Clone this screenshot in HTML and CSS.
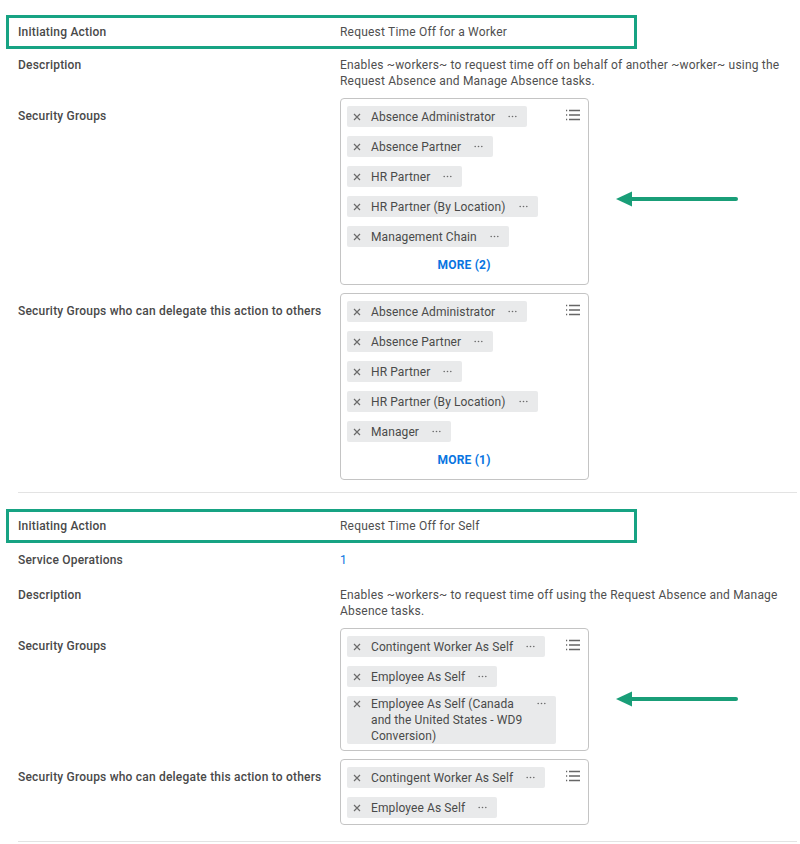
FILE: index.html
```html
<!DOCTYPE html>
<html lang="en">
<head>
    <meta charset="UTF-8">
    <meta name="viewport" content="width=device-width, initial-scale=1.0">
    <title>Business Process Policy - Initiating Actions</title>
    <link rel="stylesheet" href="styles.css">
</head>
<body>
    <main class="page">
        <!-- Request Time Off for a Worker -->
        <section class="record">
            <div class="field field-hl">
                <div class="field-label">Initiating Action</div>
                <div class="field-value">Request Time Off for a Worker</div>
            </div>
            <div class="field field-desc">
                <div class="field-label">Description</div>
                <div class="field-value">Enables ~workers~ to request time off on behalf of another ~worker~ using the Request Absence and Manage Absence tasks.</div>
            </div>
            <div class="field">
                <div class="field-label field-label-box">Security Groups</div>
                <div class="field-value field-value-row">
                    <div class="picker">
                        <div class="picker-top">
                            <ul class="chips">
                                <li class="chip"><svg class="chip-x" viewBox="0 0 8 8"><path d="M1 1L7 7M7 1L1 7"/></svg><span class="chip-text">Absence Administrator</span><svg class="chip-dots" viewBox="0 0 9 3"><circle cx="1.2" cy="1.5" r="0.8"/><circle cx="4.5" cy="1.5" r="0.8"/><circle cx="7.8" cy="1.5" r="0.8"/></svg></li>
                                <li class="chip"><svg class="chip-x" viewBox="0 0 8 8"><path d="M1 1L7 7M7 1L1 7"/></svg><span class="chip-text">Absence Partner</span><svg class="chip-dots" viewBox="0 0 9 3"><circle cx="1.2" cy="1.5" r="0.8"/><circle cx="4.5" cy="1.5" r="0.8"/><circle cx="7.8" cy="1.5" r="0.8"/></svg></li>
                                <li class="chip"><svg class="chip-x" viewBox="0 0 8 8"><path d="M1 1L7 7M7 1L1 7"/></svg><span class="chip-text">HR Partner</span><svg class="chip-dots" viewBox="0 0 9 3"><circle cx="1.2" cy="1.5" r="0.8"/><circle cx="4.5" cy="1.5" r="0.8"/><circle cx="7.8" cy="1.5" r="0.8"/></svg></li>
                                <li class="chip"><svg class="chip-x" viewBox="0 0 8 8"><path d="M1 1L7 7M7 1L1 7"/></svg><span class="chip-text">HR Partner (By Location)</span><svg class="chip-dots" viewBox="0 0 9 3"><circle cx="1.2" cy="1.5" r="0.8"/><circle cx="4.5" cy="1.5" r="0.8"/><circle cx="7.8" cy="1.5" r="0.8"/></svg></li>
                                <li class="chip"><svg class="chip-x" viewBox="0 0 8 8"><path d="M1 1L7 7M7 1L1 7"/></svg><span class="chip-text">Management Chain</span><svg class="chip-dots" viewBox="0 0 9 3"><circle cx="1.2" cy="1.5" r="0.8"/><circle cx="4.5" cy="1.5" r="0.8"/><circle cx="7.8" cy="1.5" r="0.8"/></svg></li>
                            </ul>
                            <svg class="list-icon" viewBox="0 0 16 12"><path d="M1 1.5h1.2M1 6h1.2M1 10.5h1.2M4 1.5h11M4 6h11M4 10.5h11"/></svg>
                        </div>
                        <div class="more">MORE (2)</div>
                    </div>
                    <svg class="pointer" viewBox="0 0 122 16"><path class="pointer-head" d="M0 8L16 0.5V15.5Z"/><path class="pointer-line" d="M14 8H120"/></svg>
                </div>
            </div>
            <div class="field">
                <div class="field-label field-label-box">Security Groups who can delegate this action to others</div>
                <div class="field-value">
                    <div class="picker">
                        <div class="picker-top">
                            <ul class="chips">
                                <li class="chip"><svg class="chip-x" viewBox="0 0 8 8"><path d="M1 1L7 7M7 1L1 7"/></svg><span class="chip-text">Absence Administrator</span><svg class="chip-dots" viewBox="0 0 9 3"><circle cx="1.2" cy="1.5" r="0.8"/><circle cx="4.5" cy="1.5" r="0.8"/><circle cx="7.8" cy="1.5" r="0.8"/></svg></li>
                                <li class="chip"><svg class="chip-x" viewBox="0 0 8 8"><path d="M1 1L7 7M7 1L1 7"/></svg><span class="chip-text">Absence Partner</span><svg class="chip-dots" viewBox="0 0 9 3"><circle cx="1.2" cy="1.5" r="0.8"/><circle cx="4.5" cy="1.5" r="0.8"/><circle cx="7.8" cy="1.5" r="0.8"/></svg></li>
                                <li class="chip"><svg class="chip-x" viewBox="0 0 8 8"><path d="M1 1L7 7M7 1L1 7"/></svg><span class="chip-text">HR Partner</span><svg class="chip-dots" viewBox="0 0 9 3"><circle cx="1.2" cy="1.5" r="0.8"/><circle cx="4.5" cy="1.5" r="0.8"/><circle cx="7.8" cy="1.5" r="0.8"/></svg></li>
                                <li class="chip"><svg class="chip-x" viewBox="0 0 8 8"><path d="M1 1L7 7M7 1L1 7"/></svg><span class="chip-text">HR Partner (By Location)</span><svg class="chip-dots" viewBox="0 0 9 3"><circle cx="1.2" cy="1.5" r="0.8"/><circle cx="4.5" cy="1.5" r="0.8"/><circle cx="7.8" cy="1.5" r="0.8"/></svg></li>
                                <li class="chip"><svg class="chip-x" viewBox="0 0 8 8"><path d="M1 1L7 7M7 1L1 7"/></svg><span class="chip-text">Manager</span><svg class="chip-dots" viewBox="0 0 9 3"><circle cx="1.2" cy="1.5" r="0.8"/><circle cx="4.5" cy="1.5" r="0.8"/><circle cx="7.8" cy="1.5" r="0.8"/></svg></li>
                            </ul>
                            <svg class="list-icon" viewBox="0 0 16 12"><path d="M1 1.5h1.2M1 6h1.2M1 10.5h1.2M4 1.5h11M4 6h11M4 10.5h11"/></svg>
                        </div>
                        <div class="more">MORE (1)</div>
                    </div>
                </div>
            </div>
        </section>

        <!-- Request Time Off for Self -->
        <section class="record record-next">
            <div class="field field-hl">
                <div class="field-label">Initiating Action</div>
                <div class="field-value">Request Time Off for Self</div>
            </div>
            <div class="field field-ops">
                <div class="field-label">Service Operations</div>
                <div class="field-value"><a class="link" href="#">1</a></div>
            </div>
            <div class="field field-desc">
                <div class="field-label">Description</div>
                <div class="field-value">Enables ~workers~ to request time off using the Request Absence and Manage Absence tasks.</div>
            </div>
            <div class="field">
                <div class="field-label field-label-box">Security Groups</div>
                <div class="field-value field-value-row">
                    <div class="picker">
                        <div class="picker-top">
                            <ul class="chips">
                                <li class="chip"><svg class="chip-x" viewBox="0 0 8 8"><path d="M1 1L7 7M7 1L1 7"/></svg><span class="chip-text">Contingent Worker As Self</span><svg class="chip-dots" viewBox="0 0 9 3"><circle cx="1.2" cy="1.5" r="0.8"/><circle cx="4.5" cy="1.5" r="0.8"/><circle cx="7.8" cy="1.5" r="0.8"/></svg></li>
                                <li class="chip"><svg class="chip-x" viewBox="0 0 8 8"><path d="M1 1L7 7M7 1L1 7"/></svg><span class="chip-text">Employee As Self</span><svg class="chip-dots" viewBox="0 0 9 3"><circle cx="1.2" cy="1.5" r="0.8"/><circle cx="4.5" cy="1.5" r="0.8"/><circle cx="7.8" cy="1.5" r="0.8"/></svg></li>
                                <li class="chip chip-wrap"><svg class="chip-x" viewBox="0 0 8 8"><path d="M1 1L7 7M7 1L1 7"/></svg><span class="chip-text">Employee As Self (Canada and the United States - WD9 Conversion)</span><svg class="chip-dots" viewBox="0 0 9 3"><circle cx="1.2" cy="1.5" r="0.8"/><circle cx="4.5" cy="1.5" r="0.8"/><circle cx="7.8" cy="1.5" r="0.8"/></svg></li>
                            </ul>
                            <svg class="list-icon" viewBox="0 0 16 12"><path d="M1 1.5h1.2M1 6h1.2M1 10.5h1.2M4 1.5h11M4 6h11M4 10.5h11"/></svg>
                        </div>
                    </div>
                    <svg class="pointer pointer-low" viewBox="0 0 122 16"><path class="pointer-head" d="M0 8L16 0.5V15.5Z"/><path class="pointer-line" d="M14 8H120"/></svg>
                </div>
            </div>
            <div class="field">
                <div class="field-label field-label-box">Security Groups who can delegate this action to others</div>
                <div class="field-value">
                    <div class="picker">
                        <div class="picker-top">
                            <ul class="chips">
                                <li class="chip"><svg class="chip-x" viewBox="0 0 8 8"><path d="M1 1L7 7M7 1L1 7"/></svg><span class="chip-text">Contingent Worker As Self</span><svg class="chip-dots" viewBox="0 0 9 3"><circle cx="1.2" cy="1.5" r="0.8"/><circle cx="4.5" cy="1.5" r="0.8"/><circle cx="7.8" cy="1.5" r="0.8"/></svg></li>
                                <li class="chip"><svg class="chip-x" viewBox="0 0 8 8"><path d="M1 1L7 7M7 1L1 7"/></svg><span class="chip-text">Employee As Self</span><svg class="chip-dots" viewBox="0 0 9 3"><circle cx="1.2" cy="1.5" r="0.8"/><circle cx="4.5" cy="1.5" r="0.8"/><circle cx="7.8" cy="1.5" r="0.8"/></svg></li>
                            </ul>
                            <svg class="list-icon" viewBox="0 0 16 12"><path d="M1 1.5h1.2M1 6h1.2M1 10.5h1.2M4 1.5h11M4 6h11M4 10.5h11"/></svg>
                        </div>
                    </div>
                </div>
            </div>
        </section>
    </main>
</body>
</html>
```

FILE: styles.css
```css
* {
    margin: 0;
    padding: 0;
    box-sizing: border-box;
}

body {
    font-family: Roboto, "Liberation Sans", Arial, sans-serif;
    font-size: 12px;
    line-height: 16px;
    letter-spacing: 0.2px;
    color: #4a4a4a;
    background: #fff;
}

.page {
    padding-top: 15px;
}

.record {
    margin: 0 3px 0 18px;
    padding-bottom: 12px;
    border-bottom: 1px solid #e3e3e3;
    display: flex;
    flex-direction: column;
    gap: 8px;
}

.record-next {
    padding-top: 16px;
    padding-bottom: 16px;
}

.field {
    display: grid;
    grid-template-columns: 322px 1fr;
}

.field-label {
    font-weight: 500;
    color: #494949;
}

.field-label-box {
    padding-top: 10px;
}

.field-value {
    color: #4f4f4f;
}

/* green highlight around the initiating action row */
.field-hl {
    margin-left: -12px;
    width: 631px;
    padding: 6px 0 6px 9px;
    border: 3px solid #17a383;
}

.field-desc {
    padding-bottom: 1px;
}

.field-ops {
    padding: 1px 0 11px;
}

.link {
    color: #0875e1;
    text-decoration: none;
}

.field-value-row {
    display: flex;
    align-items: flex-start;
}

/* multi-select prompt box */
.picker {
    width: 249px;
    border: 1px solid #c4c4c4;
    border-radius: 4px;
    padding: 7px 7px 6px 6px;
}

.picker-top {
    display: flex;
    align-items: flex-start;
}

.chips {
    list-style: none;
    flex: 1;
    display: flex;
    flex-direction: column;
    align-items: flex-start;
    gap: 9px;
}

.chip {
    display: flex;
    align-items: flex-start;
    max-width: 209px;
    background: #e9eaeb;
    border-radius: 2px;
    padding: 3px 10px 2px 6px;
    color: #4a4a4a;
    letter-spacing: 0.1px;
}

.chip-wrap {
    padding-top: 0;
    padding-bottom: 0;
}

.chip-x {
    flex: none;
    width: 8px;
    height: 8px;
    margin: 4px 10px 0 0;
    stroke: #6b6b6b;
    stroke-width: 1.2;
    fill: none;
}

.chip-text {
    flex: 0 1 auto;
}

.chip-dots {
    flex: none;
    width: 9px;
    height: 3px;
    margin: 6px 0 0 13px;
    fill: #6b6b6b;
}

.list-icon {
    flex: none;
    width: 16px;
    height: 12px;
    margin-top: 3px;
    stroke: #666;
    stroke-width: 1.3;
    fill: none;
}

.more {
    margin: 10px 0 5px;
    text-align: center;
    font-weight: 700;
    color: #0875e1;
}

/* annotation arrow pointing at the security groups */
.pointer {
    flex: none;
    width: 122px;
    height: 16px;
    margin: 14px 0 0 27px;
    align-self: center;
}

.pointer-low {
    margin-top: 19px;
}

.pointer-head {
    fill: #199e78;
}

.pointer-line {
    stroke: #199e78;
    stroke-width: 4;
    stroke-linecap: round;
}
```
